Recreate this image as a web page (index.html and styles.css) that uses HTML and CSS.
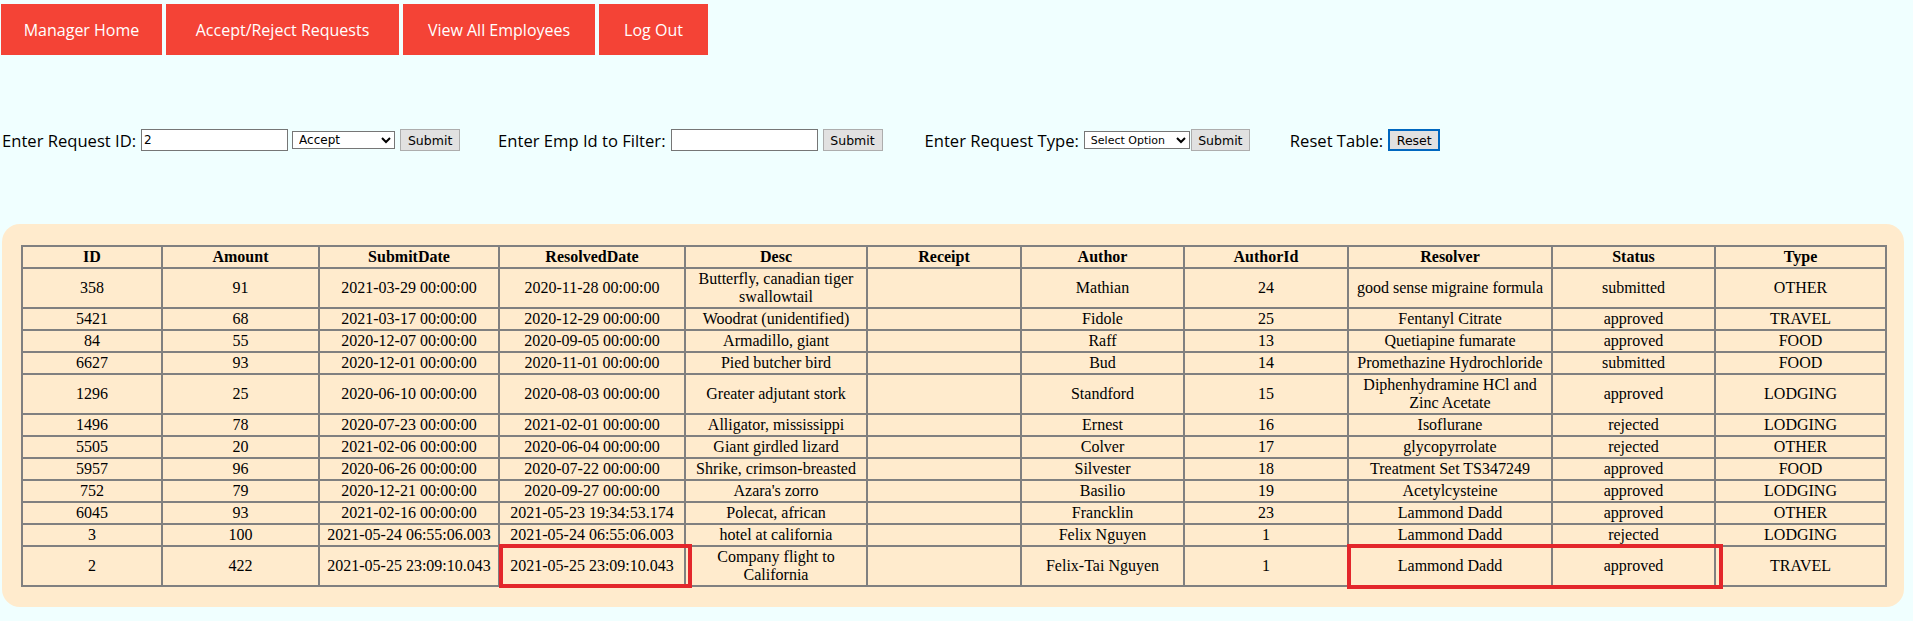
FILE: index.html
```html
<!DOCTYPE html>
<html>
<head>
<meta charset="utf-8">
<title>Manager - Requests</title>
<link rel="stylesheet" href="styles.css">
</head>
<body>
<nav class="nav">
  <a class="nav-link w-home" href="#">Manager Home</a>
  <a class="nav-link w-req" href="#">Accept/Reject Requests</a>
  <a class="nav-link w-emp" href="#">View All Employees</a>
  <a class="nav-link w-out" href="#">Log Out</a>
</nav>

<form class="filters">
  <div class="group">
    <label class="lbl">Enter Request ID:</label>
    <input class="txt" type="text" value="2">
    <select class="sel sel-acc"><option>Accept</option></select>
    <button class="btn" type="button">Submit</button>
  </div>
  <div class="group">
    <label class="lbl">Enter Emp Id to Filter:</label>
    <input class="txt" type="text">
    <button class="btn" type="button">Submit</button>
  </div>
  <div class="group g-type">
    <label class="lbl">Enter Request Type:</label>
    <div class="tight">
      <select class="sel sel-type"><option>Select Option</option></select>
      <button class="btn btn-type" type="button">Submit</button>
    </div>
  </div>
  <div class="group g-reset">
    <label class="lbl">Reset Table:</label>
    <button class="btn btn-reset" type="button">Reset</button>
  </div>
</form>

<section class="panel">
  <table class="grid">
    <colgroup>
      <col class="c1"><col class="c2"><col class="c3"><col class="c4"><col class="c5"><col class="c6"><col class="c7"><col class="c8"><col class="c9"><col class="c10"><col class="c11">
    </colgroup>
    <thead>
      <tr><th>ID</th><th>Amount</th><th>SubmitDate</th><th>ResolvedDate</th><th>Desc</th><th>Receipt</th><th>Author</th><th>AuthorId</th><th>Resolver</th><th>Status</th><th>Type</th></tr>
    </thead>
    <tbody>
      <tr><td>358</td><td>91</td><td>2021-03-29 00:00:00</td><td>2020-11-28 00:00:00</td><td>Butterfly, canadian tiger swallowtail</td><td></td><td>Mathian</td><td>24</td><td>good sense migraine formula</td><td>submitted</td><td>OTHER</td></tr>
      <tr><td>5421</td><td>68</td><td>2021-03-17 00:00:00</td><td>2020-12-29 00:00:00</td><td>Woodrat (unidentified)</td><td></td><td>Fidole</td><td>25</td><td>Fentanyl Citrate</td><td>approved</td><td>TRAVEL</td></tr>
      <tr><td>84</td><td>55</td><td>2020-12-07 00:00:00</td><td>2020-09-05 00:00:00</td><td>Armadillo, giant</td><td></td><td>Raff</td><td>13</td><td>Quetiapine fumarate</td><td>approved</td><td>FOOD</td></tr>
      <tr><td>6627</td><td>93</td><td>2020-12-01 00:00:00</td><td>2020-11-01 00:00:00</td><td>Pied butcher bird</td><td></td><td>Bud</td><td>14</td><td>Promethazine Hydrochloride</td><td>submitted</td><td>FOOD</td></tr>
      <tr><td>1296</td><td>25</td><td>2020-06-10 00:00:00</td><td>2020-08-03 00:00:00</td><td>Greater adjutant stork</td><td></td><td>Standford</td><td>15</td><td>Diphenhydramine HCl and Zinc Acetate</td><td>approved</td><td>LODGING</td></tr>
      <tr><td>1496</td><td>78</td><td>2020-07-23 00:00:00</td><td>2021-02-01 00:00:00</td><td>Alligator, mississippi</td><td></td><td>Ernest</td><td>16</td><td>Isoflurane</td><td>rejected</td><td>LODGING</td></tr>
      <tr><td>5505</td><td>20</td><td>2021-02-06 00:00:00</td><td>2020-06-04 00:00:00</td><td>Giant girdled lizard</td><td></td><td>Colver</td><td>17</td><td>glycopyrrolate</td><td>rejected</td><td>OTHER</td></tr>
      <tr><td>5957</td><td>96</td><td>2020-06-26 00:00:00</td><td>2020-07-22 00:00:00</td><td>Shrike, crimson-breasted</td><td></td><td>Silvester</td><td>18</td><td>Treatment Set TS347249</td><td>approved</td><td>FOOD</td></tr>
      <tr><td>752</td><td>79</td><td>2020-12-21 00:00:00</td><td>2020-09-27 00:00:00</td><td>Azara's zorro</td><td></td><td>Basilio</td><td>19</td><td>Acetylcysteine</td><td>approved</td><td>LODGING</td></tr>
      <tr><td>6045</td><td>93</td><td>2021-02-16 00:00:00</td><td>2021-05-23 19:34:53.174</td><td>Polecat, african</td><td></td><td>Francklin</td><td>23</td><td>Lammond Dadd</td><td>approved</td><td>OTHER</td></tr>
      <tr><td>3</td><td>100</td><td>2021-05-24 06:55:06.003</td><td>2021-05-24 06:55:06.003</td><td>hotel at california</td><td></td><td>Felix Nguyen</td><td>1</td><td>Lammond Dadd</td><td>rejected</td><td>LODGING</td></tr>
      <tr><td>2</td><td>422</td><td>2021-05-25 23:09:10.043</td><td class="mark mark-date">2021-05-25 23:09:10.043</td><td>Company flight to California</td><td></td><td>Felix-Tai Nguyen</td><td>1</td><td class="mark mark-pair">Lammond Dadd</td><td>approved</td><td>TRAVEL</td></tr>
    </tbody>
  </table>
</section>
</body>
</html>
```
FILE: styles.css
```css
html, body {
  margin: 0;
  padding: 0;
}
body {
  background: #f0ffff;
  font-family: "Open Sans", "DejaVu Sans", sans-serif;
  color: #000;
  width: 1913px;
}

/* top navigation */
.nav {
  display: flex;
  gap: 4px;
  padding: 4px 0 0 1px;
}
.nav-link {
  display: flex;
  align-items: center;
  justify-content: center;
  height: 51px;
  background: #f44336;
  color: #fff;
  text-decoration: none;
  font-size: 16px;
  box-sizing: border-box;
}
.w-home { width: 161px; }
.w-req { width: 233px; }
.w-emp { width: 192px; }
.w-out { width: 109px; }

/* filter row */
.filters {
  display: flex;
  align-items: center;
  gap: 38px;
  margin: 74px 0 0 2px;
  height: 22px;
}
.group {
  display: flex;
  align-items: center;
  gap: 5px;
}
.g-type { margin-left: 4px; }
.g-reset { margin-left: 2px; }
.tight {
  display: flex;
  align-items: center;
  gap: 1px;
}
.lbl {
  font-size: 16.6px;
  white-space: nowrap;
}
.txt {
  box-sizing: border-box;
  width: 147px;
  height: 22px;
  margin: 0;
  padding: 1px 2px;
  border: 1px solid #767676;
  background: #fff;
  font-family: "DejaVu Sans", sans-serif;
  font-size: 12px;
}
.sel {
  box-sizing: border-box;
  height: 18px;
  margin: 0;
  padding: 0 0 0 2px;
  border: 1px solid #767676;
  background: #fff;
  font-family: "DejaVu Sans", sans-serif;
  font-size: 12px;
  color: #000;
}
.sel-acc { width: 103px; margin-left: -1px; }
.sel-type { width: 106px; font-size: 11px; }
.btn {
  box-sizing: border-box;
  width: 60px;
  height: 22px;
  margin: 0;
  padding: 0;
  border: 1px solid #adadad;
  background: #e1e1e1;
  font-family: "DejaVu Sans", sans-serif;
  font-size: 12.5px;
  color: #000;
}
.btn-type { width: 59px; }
.btn-reset {
  width: 52px;
  border: 2px solid #0067c0;
}

/* table panel */
.panel {
  margin: 73px 9px 0 2px;
  padding: 21px 19px 20px 19px;
  background: #ffebcd;
  border-radius: 18px;
}
.grid {
  width: 1864px;
  table-layout: fixed;
  border-collapse: collapse;
  border: 2px solid #808080;
  font-family: "Liberation Serif", "Times New Roman", serif;
  font-size: 16px;
  line-height: 18px;
}
.grid th, .grid td {
  border: 2px solid #808080;
  padding: 1px 2px;
  text-align: center;
  vertical-align: middle;
}
.grid th { font-weight: bold; }
.c1 { width: 140px; }
.c2 { width: 157px; }
.c3 { width: 180px; }
.c4 { width: 186px; }
.c5 { width: 182px; }
.c6 { width: 154px; }
.c7 { width: 163px; }
.c8 { width: 164px; }
.c9 { width: 204px; }
.c10 { width: 163px; }
.c11 { width: 171px; }

/* red annotation boxes */
.mark { position: relative; }
.mark::after {
  content: "";
  position: absolute;
  border: 4px solid #e3262b;
  pointer-events: none;
}
.mark-date::after {
  top: -3px;
  bottom: -3px;
  left: -1px;
  right: -8px;
}
.mark-pair::after {
  top: -3px;
  bottom: -4px;
  left: -2px;
  right: -172px;
}
```
